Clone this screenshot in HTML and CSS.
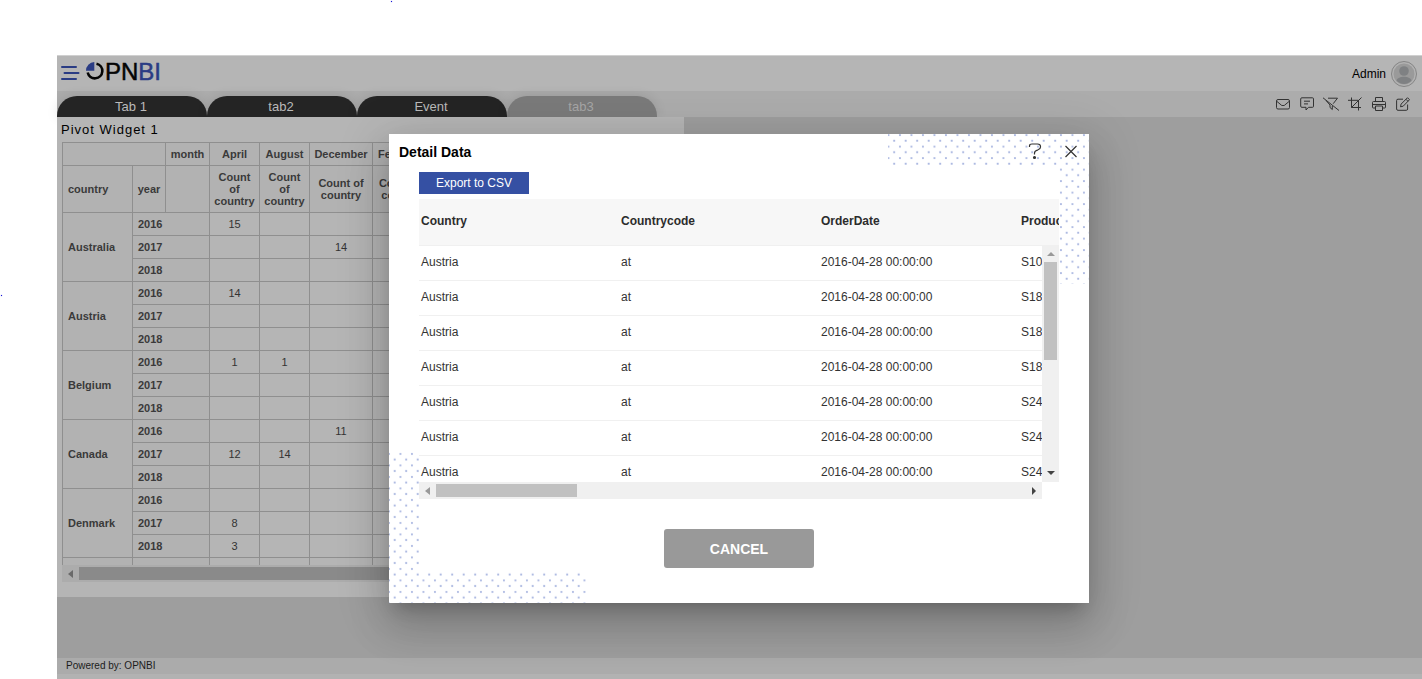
FILE: index.html
```html
<!DOCTYPE html>
<html lang="en">
<head>
<meta charset="utf-8">
<title>OPNBI</title>
<link rel="stylesheet" href="styles.css">
</head>
<body>
<i class="speck speck-top"></i>
<i class="speck speck-left"></i>
<div class="app">
  <header class="header">
    <button class="icon-btn menu" aria-label="Menu">
      <svg width="20" height="16" viewBox="0 0 20 16" fill="none" stroke="#2a3c84" stroke-width="2" stroke-linecap="round"><path d="M2 2h14M4.500 8h14M2 14h14"/></svg>
    </button>
    <div class="logo">
      <svg width="20" height="20" viewBox="0 0 20 20"><path d="M11.500 1.700A7.400 7.400 0 1 1 2.700 10.500" fill="none" stroke="#050505" stroke-width="2.600"/><path d="M9.300 8.800V0A8.600 8.600 0 0 0 1 8.800z" fill="#2a3c84"/></svg>
      <span class="logo-text">PN<b>BI</b></span>
    </div>
    <span class="user">Admin</span>
    <svg class="avatar" width="28" height="28" viewBox="0 0 28 28"><circle cx="14" cy="14" r="12.500" fill="#b2b2b2" stroke="#858585"/><circle cx="14" cy="14" r="10.500" fill="#9a9a9a"/><circle cx="14" cy="11" r="4.800" fill="#7f8183"/><path d="M6.500 20.500c1.500-5 13.500-5 15 0a10 10 0 0 1-15 0z" fill="#7f8183"/></svg>
  </header>
  <div class="tabbar">
    <nav class="tabs">
      <button class="tab">Tab 1</button>
      <button class="tab">tab2</button>
      <button class="tab">Event</button>
      <button class="tab tab-muted">tab3</button>
    </nav>
    <div class="tools">
      <button class="icon-btn" aria-label="Mail"><svg width="14" height="14" viewBox="0 0 14 14"><rect x=".5" y="2.500" width="13" height="9.500" rx="1.500"/><path d="M1 4.500l4.800 4h2.400l4.800-4"/></svg></button>
      <button class="icon-btn" aria-label="Comment"><svg width="14" height="14" viewBox="0 0 14 14"><path d="M2 .8h10.500q1 0 1 1v7.500q0 1-1 1H8.500L6 13v-2.700H2q-1.300 0-1.300-1V1.800q0-1 1.300-1zM4 4.200h6M4 6.900h4"/></svg></button>
      <button class="icon-btn" aria-label="Clear filter"><svg width="16" height="14" viewBox="0 0 16 14"><path d="M0 .8L16 13.500M5 1.200h9.500L10.200 6.700M3 3.500l4 4.500v2.500l2.300 2V9"/></svg></button>
      <button class="icon-btn" aria-label="Crop"><svg width="14" height="14" viewBox="0 0 14 14"><path d="M3.500.5v10H13M0 3.300h10.500V13.500M13.500.5l-10 10"/></svg></button>
      <button class="icon-btn" aria-label="Print"><svg width="14" height="14" viewBox="0 0 14 14"><path d="M3.500 4.500v-4h7v4M3.500 11H1.300Q.5 11 .5 10V5.500q0-1 1-1h11q1 0 1 1V10q0 1-.8 1h-2.200M.5 7.500h13M3.500 9h7v4.500h-7z"/></svg></button>
      <button class="icon-btn" aria-label="Edit"><svg width="14" height="14" viewBox="0 0 14 14"><path d="M7 2.200H2Q.6 2.200.6 3.500V12q0 1.300 1.400 1.300h8.300q1.300 0 1.300-1.300V7.500M4.500 9.800l.6-2.700L11.500.7l2 2-6.300 6.500zM10 2.300l2 2"/></svg></button>
    </div>
  </div>
  <main class="board">
    <section class="widget">
      <h2 class="widget-title">Pivot Widget 1</h2>
      <div class="pivot-view">
        <table class="pivot">
          <colgroup><col class="c-country"><col class="c-year"><col class="c-month"><col class="c-narrow"><col class="c-narrow"><col class="c-wide"><col class="c-feb"></colgroup>
          <thead>
            <tr><th colspan="2"></th><th>month</th><th>April</th><th>August</th><th>December</th><th>February</th></tr>
            <tr class="measures"><th class="left">country</th><th>year</th><th></th><th>Count of country</th><th>Count of country</th><th>Count of country</th><th>Count of country</th></tr>
          </thead>
          <tbody>
            <tr><th rowspan="3">Australia</th><th colspan="2">2016</th><td>15</td><td></td><td></td><td></td></tr>
            <tr><th colspan="2">2017</th><td></td><td></td><td>14</td><td></td></tr>
            <tr><th colspan="2">2018</th><td></td><td></td><td></td><td></td></tr>
            <tr><th rowspan="3">Austria</th><th colspan="2">2016</th><td>14</td><td></td><td></td><td></td></tr>
            <tr><th colspan="2">2017</th><td></td><td></td><td></td><td></td></tr>
            <tr><th colspan="2">2018</th><td></td><td></td><td></td><td></td></tr>
            <tr><th rowspan="3">Belgium</th><th colspan="2">2016</th><td>1</td><td>1</td><td></td><td></td></tr>
            <tr><th colspan="2">2017</th><td></td><td></td><td></td><td></td></tr>
            <tr><th colspan="2">2018</th><td></td><td></td><td></td><td></td></tr>
            <tr><th rowspan="3">Canada</th><th colspan="2">2016</th><td></td><td></td><td>11</td><td></td></tr>
            <tr><th colspan="2">2017</th><td>12</td><td>14</td><td></td><td></td></tr>
            <tr><th colspan="2">2018</th><td></td><td></td><td></td><td></td></tr>
            <tr><th rowspan="3">Denmark</th><th colspan="2">2016</th><td></td><td></td><td></td><td></td></tr>
            <tr><th colspan="2">2017</th><td>8</td><td></td><td></td><td></td></tr>
            <tr><th colspan="2">2018</th><td>3</td><td></td><td></td><td></td></tr>
            <tr><th></th><th colspan="2"></th><td></td><td></td><td></td><td></td></tr>
          </tbody>
        </table>
      </div>
      <div class="hbar hbar-dim"><i class="arrow arrow-left"></i><i class="hthumb"></i></div>
    </section>
  </main>
  <footer class="footer">Powered by: OPNBI</footer>
</div>

<div class="overlay">
  <section class="dialog" role="dialog" aria-labelledby="dialog-title">
    <svg class="dots dots-tr" width="201" height="150" viewBox="499 0 201 150">
      <defs><pattern id="dots" width="11.500" height="11.500" patternUnits="userSpaceOnUse" x="505.200" y="-1.800"><circle cx="5.750" cy="2.900" r="1.100" fill="#a9b6e0"/><circle cx="0" cy="8.600" r="1.100" fill="#a9b6e0"/><circle cx="11.500" cy="8.600" r="1.100" fill="#a9b6e0"/></pattern></defs>
      <path d="M499 0h201v150h-30V32H499z" fill="url(#dots)"/>
    </svg>
    <svg class="dots dots-bl" width="197" height="153" viewBox="0 0 197 153">
      <defs><pattern id="dots2" width="11.500" height="11.500" patternUnits="userSpaceOnUse" x="5.700" y="1"><circle cx="5.750" cy="2.900" r="1.100" fill="#a9b6e0"/><circle cx="0" cy="8.600" r="1.100" fill="#a9b6e0"/><circle cx="11.500" cy="8.600" r="1.100" fill="#a9b6e0"/></pattern></defs>
      <path d="M0 0h30v122h167v31H0z" fill="url(#dots2)"/>
    </svg>
    <div class="dialog-head">
      <h1 class="dialog-title" id="dialog-title">Detail Data</h1>
      <button class="icon-btn" aria-label="Help"><svg width="14" height="18" viewBox="0 0 14 18" fill="none" stroke="#333" stroke-width="1.200"><path d="M1.500 4V3Q1.500 1 4 1h5.500Q12.500 1 12.500 3.500v.5Q12.500 6 10 6.800 6.500 7.800 6.500 10v1.500"/><circle cx="6.500" cy="14.500" r="1" fill="#333"/></svg></button>
      <button class="icon-btn close" aria-label="Close"><svg width="14" height="14" viewBox="0 0 14 14" stroke="#333" stroke-width="1.200"><path d="M1.500 1l11 11M12.500 1l-11 11"/></svg></button>
    </div>
    <div class="dialog-body">
      <button class="export">Export to CSV</button>
      <div class="grid">
        <div class="grid-view">
          <table class="detail">
            <thead><tr><th>Country</th><th>Countrycode</th><th>OrderDate</th><th>Productcode</th></tr></thead>
            <tbody>
              <tr><td>Austria</td><td>at</td><td>2016-04-28 00:00:00</td><td>S10</td></tr>
              <tr><td>Austria</td><td>at</td><td>2016-04-28 00:00:00</td><td>S18</td></tr>
              <tr><td>Austria</td><td>at</td><td>2016-04-28 00:00:00</td><td>S18</td></tr>
              <tr><td>Austria</td><td>at</td><td>2016-04-28 00:00:00</td><td>S18</td></tr>
              <tr><td>Austria</td><td>at</td><td>2016-04-28 00:00:00</td><td>S24</td></tr>
              <tr><td>Austria</td><td>at</td><td>2016-04-28 00:00:00</td><td>S24</td></tr>
              <tr><td>Austria</td><td>at</td><td>2016-04-28 00:00:00</td><td>S24</td></tr>
            </tbody>
          </table>
          <div class="vbar"><i class="arrow arrow-up"></i><i class="vthumb"></i><i class="arrow arrow-down"></i></div>
        </div>
        <div class="hbar hbar-grid"><i class="arrow arrow-left"></i><i class="hthumb"></i><i class="arrow arrow-right"></i></div>
      </div>
      <button class="cancel">CANCEL</button>
    </div>
  </section>
</div>
</body>
</html>
```
FILE: styles.css
```css
* { box-sizing: border-box; }
body { margin: 0; background: #fff; font-family: "Liberation Sans", Arial, sans-serif; font-size: 12px; color: #000; overflow: hidden; }
button { font: inherit; border: 0; padding: 0; margin: 0; background: none; cursor: pointer; }
svg { display: block; }
h1, h2 { margin: 0; }

.speck { position: absolute; width: 1px; height: 1px; background: #1818d8; box-shadow: 0 0 1px #1818d8; }
.speck-top { left: 391px; top: 1px; }
.speck-left { left: 1px; top: 295px; }

.app { margin: 55px 0 0 57px; height: calc(100vh - 55px); display: flex; flex-direction: column; background: #b2b2b2; padding-bottom: 5px; }
.header { height: 36px; flex: none; display: flex; align-items: center; background: #b5b5b5; border-top: 1px solid #d0d0d0; padding: 0 4px 0 3px; }
.icon-btn { display: flex; align-items: center; justify-content: center; }
.logo { display: flex; align-items: center; margin: 0 auto 4px 5px; }
.logo-text { font-size: 24px; line-height: 28px; color: #050505; -webkit-text-stroke: 0.5px currentColor; }
.logo-text b { font-weight: 400; color: #2a3c84; }
.menu { margin-bottom: 1px; }
.user { margin-right: 4px; }

.tabbar { height: 26px; flex: none; display: flex; justify-content: space-between; align-items: flex-end; background: #acacac; }
.tabs { display: flex; }
.tab { width: 150px; height: 21px; border-radius: 20px 20px 0 0; background: #242424; color: #bababa; font-size: 13px; line-height: 21px; padding-right: 2px; box-shadow: 0 0 12px rgba(0,0,0,.12); }
.tab-muted { background: #7a7a7a; color: #a6a6a6; }
.tools { height: 26px; display: flex; align-items: center; gap: 10px; padding-right: 12px; }
.tools .icon-btn { width: 14px; }
.tools svg { flex: none; fill: none; stroke: #333; stroke-width: 1; }

.board { flex: 1; min-height: 0; background: #9e9e9e; }
.widget { width: 627px; height: 480px; background: #b5b5b5; padding: 0 4px 0 5px; }
.widget-title { font-size: 13px; font-weight: 400; line-height: 25px; letter-spacing: 1px; margin-left: -1px; }
.pivot-view { height: 423px; overflow: hidden; }
.pivot { table-layout: fixed; border-collapse: collapse; width: 369px; font-size: 11px; line-height: 12px; color: #333; }
.pivot th, .pivot td { border: 1px solid #8f8f8f; height: 23px; padding: 0 5px; text-align: center; }
.pivot th { background: #b2b2b2; color: #3a3a3a; }
.pivot thead th { padding: 0 2px; }
.pivot .measures th { height: 47px; }
.pivot tbody th, .pivot thead .left { text-align: left; padding-left: 5px; }
.c-country { width: 70px; }
.c-year { width: 33px; }
.c-month { width: 44px; }
.c-narrow { width: 50px; }
.c-wide { width: 63px; }
.c-feb { width: 58px; }

.hbar { height: 17px; display: flex; align-items: center; background: #f0f0f0; }
.hthumb { height: 13px; background: #c1c1c1; }
.hbar-dim { background: #acacac; }
.hbar-dim .hthumb { flex: 1; background: #8a8a8a; }
.arrow { flex: none; width: 0; height: 0; border: 4px solid transparent; }
.arrow-left { border-right-color: #999; border-left-width: 0; border-right-width: 5px; margin: 0 6px; }
.hbar-dim .arrow-left { border-right-color: #6a6a6a; }
.arrow-right { border-left-color: #444; border-right-width: 0; margin: 0 6px 0 auto; }
.arrow-up { border-bottom-color: #999; border-top-width: 0; margin: 7px 0 6px; }
.arrow-down { border-top-color: #444; border-bottom-width: 0; margin: auto 0 7px; }

.footer { height: 16px; flex: none; background: #ababab; padding-left: 9px; font-size: 10px; line-height: 16px; color: #1c1c1c; }

.overlay { position: absolute; inset: 55px 1px 0 57px; display: flex; justify-content: center; align-items: flex-start; padding-top: 79px; }
.dialog { position: relative; width: 700px; background: #fff; padding-bottom: 35px; box-shadow: 0 11px 15px -7px rgba(0,0,0,.2), 0 24px 38px 3px rgba(0,0,0,.14), 0 9px 46px 8px rgba(0,0,0,.12); }
.dots { position: absolute; }
.dots-tr { top: 0; right: 0; }
.dots-bl { bottom: 0; left: 0; }
.dialog-head { position: relative; display: flex; align-items: center; height: 38px; padding: 0 11px 2px 10px; }
.dialog-title { font-size: 14px; line-height: 18px; margin-right: auto; }
.close { margin-left: 22px; }
.dialog-body { position: relative; padding: 0 30px; display: flex; flex-direction: column; align-items: flex-start; }
.export { width: 110px; height: 22px; background: #3550a3; color: #fff; line-height: 22px; }
.grid { width: 100%; margin-top: 5px; }
.grid-view { position: relative; height: 283px; overflow: hidden; }
.detail { table-layout: fixed; border-collapse: collapse; width: 800px; color: #333; }
.detail th { height: 46px; background: #f7f7f7; text-align: left; padding: 0 2px 2px; color: #2c2c2c; border-bottom: 1px solid #f0f0f0; }
.detail td { height: 35px; padding: 0 2px 2px; border-bottom: 1px solid #f0f0f0; }
.vbar { position: absolute; top: 46px; right: 0; bottom: 0; width: 17px; background: #f0f0f0; display: flex; flex-direction: column; align-items: center; }
.vthumb { flex: none; width: 13px; height: 98px; background: #c1c1c1; }
.hbar-grid { margin-right: 17px; }
.hbar-grid .hthumb { width: 141px; }
.cancel { align-self: center; margin-top: 30px; width: 150px; height: 39px; border-radius: 3px; background: #999; color: #fff; font-size: 14px; font-weight: 700; }
```
